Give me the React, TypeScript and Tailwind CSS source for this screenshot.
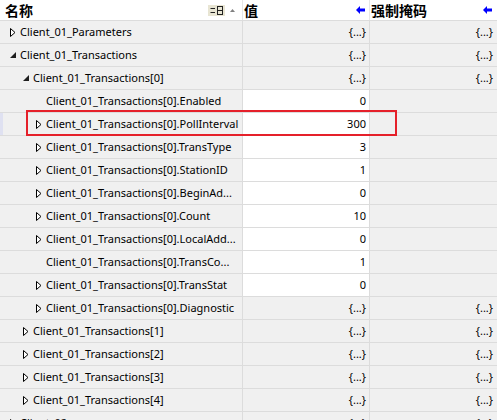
import React from "react";

type Row = {
  level: 0 | 1 | 2;
  state: "collapsed" | "expanded" | "none";
  name: string;
  value: string;
  mask: string;
  white?: boolean;
  selected?: boolean;
};

const T0 = "Client_01_Transactions[0]";

const rows: Row[] = [
  { level: 0, state: "collapsed", name: "Client_01_Parameters", value: "{...}", mask: "{...}" },
  { level: 0, state: "expanded", name: "Client_01_Transactions", value: "{...}", mask: "{...}" },
  { level: 1, state: "expanded", name: T0, value: "{...}", mask: "{...}" },
  { level: 2, state: "none", name: T0 + ".Enabled", value: "0", mask: "", white: true },
  { level: 2, state: "collapsed", name: T0 + ".PollInterval", value: "300", mask: "", white: true, selected: true },
  { level: 2, state: "collapsed", name: T0 + ".TransType", value: "3", mask: "", white: true },
  { level: 2, state: "collapsed", name: T0 + ".StationID", value: "1", mask: "", white: true },
  { level: 2, state: "collapsed", name: T0 + ".BeginAd...", value: "0", mask: "", white: true },
  { level: 2, state: "collapsed", name: T0 + ".Count", value: "10", mask: "", white: true },
  { level: 2, state: "collapsed", name: T0 + ".LocalAdd...", value: "0", mask: "", white: true },
  { level: 2, state: "none", name: T0 + ".TransCo...", value: "1", mask: "", white: true },
  { level: 2, state: "collapsed", name: T0 + ".TransStat", value: "0", mask: "", white: true },
  { level: 2, state: "collapsed", name: T0 + ".Diagnostic", value: "{...}", mask: "{...}" },
  { level: 1, state: "collapsed", name: "Client_01_Transactions[1]", value: "{...}", mask: "{...}" },
  { level: 1, state: "collapsed", name: "Client_01_Transactions[2]", value: "{...}", mask: "{...}" },
  { level: 1, state: "collapsed", name: "Client_01_Transactions[3]", value: "{...}", mask: "{...}" },
  { level: 1, state: "collapsed", name: "Client_01_Transactions[4]", value: "{...}", mask: "{...}" },
  { level: 0, state: "collapsed", name: "Client_02", value: "{...}", mask: "{...}" },
];

const indent = ["pl-[4px]", "pl-[17px]", "pl-[30px]"];

const Toggle = ({ state }: { state: Row["state"] }) => (
  <span className="w-[13px] h-full flex items-center pl-[3px] shrink-0">
    {state === "collapsed" && (
      <svg width="6" height="9" viewBox="0 0 6 9">
        <path d="M0.5 0.5 L5 4.5 L0.5 8.5 Z" fill="#fff" stroke="#000" strokeWidth="1" />
      </svg>
    )}
    {state === "expanded" && (
      <svg width="6" height="6" viewBox="0 0 6 6">
        <path d="M6 0 L6 6 L0 6 Z" fill="#1e1e1e" />
      </svg>
    )}
  </span>
);

const BlueArrow = () => (
  <svg width="9" height="8" viewBox="0 0 9 8">
    <path d="M0 4 L4 0 L4 2.5 L9 2.5 L9 5.5 L4 5.5 L4 8 Z" fill="#0000ff" />
  </svg>
);

const ColumnsIcon = () => (
  <svg width="17" height="11" viewBox="0 0 17 11">
    <rect x="0" y="0" width="17" height="11" fill="#e8e5d3" />
    <path d="M2.5 3.5 H7 M2.5 7.5 H7" stroke="#222" strokeWidth="1" />
    <rect x="9.5" y="1.5" width="5" height="8" fill="none" stroke="#222" strokeWidth="1" />
    <path d="M9.5 5.5 H14.5" stroke="#222" strokeWidth="1" />
  </svg>
);

const cjk = { fontFamily: '"Noto Sans CJK SC", sans-serif' };

export default function App() {
  return (
    <div
      className="relative w-[497px] h-[420px] overflow-hidden bg-[#f0f0f0] text-black text-[11px]"
      style={{ fontFamily: '"Noto Sans", "Noto Sans CJK SC", sans-serif' }}
    >
      {/* header */}
      <div className="grid grid-cols-[243px_127px_127px] h-[21px] bg-white border-b border-[#dcdcdc]">
        <div className="flex items-center border-r border-[#e6e6e6] pl-[5px] pr-[7px]">
          <span className="font-bold text-[14px] leading-none" style={cjk}>
            名称
          </span>
          <span className="ml-auto flex items-center gap-[5px]">
            <ColumnsIcon />
            <svg width="5" height="3" viewBox="0 0 5 3">
              <path d="M0 3 L2.5 0 L5 3 Z" fill="#808080" />
            </svg>
          </span>
        </div>
        <div className="flex items-center border-r border-[#e6e6e6] pl-[1px] pr-[4px]">
          <span className="font-bold text-[14px] leading-none" style={cjk}>
            值
          </span>
          <span className="ml-auto flex">
            <BlueArrow />
          </span>
        </div>
        <div className="flex items-center pl-[1px] pr-[5px]">
          <span className="font-bold text-[14px] leading-none" style={cjk}>
            强制掩码
          </span>
          <span className="ml-auto flex">
            <BlueArrow />
          </span>
        </div>
      </div>

      {/* rows */}
      {rows.map((r, i) => (
        <div key={i} className="grid grid-cols-[243px_127px_127px] h-[23px] border-b border-[#dcdcdc]">
          <div className="flex items-center border-r border-[#dcdcdc] min-w-0">
            <span className={`w-[3px] h-full shrink-0 ${r.selected ? "bg-[#dfe1f1]" : ""}`} />
            <div className={`flex items-center h-full min-w-0 ${indent[r.level]}`}>
              <Toggle state={r.state} />
              <span className="whitespace-nowrap">{r.name}</span>
            </div>
          </div>
          <div
            className={`flex items-center justify-end pr-[3px] border-r border-[#dcdcdc] ${
              r.white ? "bg-white" : ""
            }`}
          >
            {r.value}
          </div>
          <div className="flex items-center justify-end pr-[4px]">{r.mask}</div>
        </div>
      ))}

      {/* annotation box */}
      <div className="absolute left-[26px] top-[110px] w-[371px] h-[26px] border-2 border-[#e5202a]" />
    </div>
  );
}
